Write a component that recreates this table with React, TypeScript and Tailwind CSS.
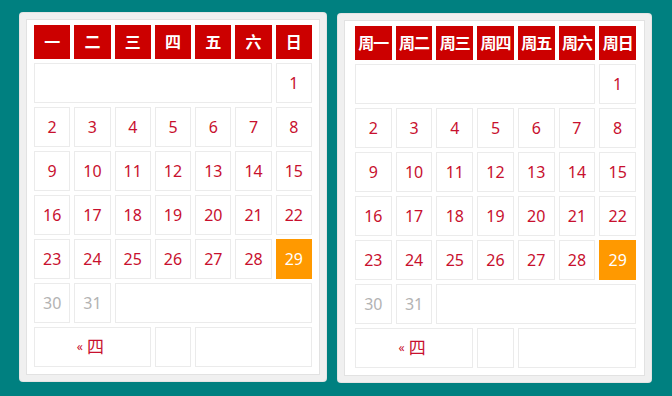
import React from 'react'

type Cell = { label?: string; span?: number; kind?: 'day' | 'today' | 'muted' | 'empty' | 'nav' }

const weeks: Cell[][] = [
  [{ span: 6, kind: 'empty' }, { label: '1' }],
  ['2', '3', '4', '5', '6', '7', '8'].map(label => ({ label })),
  ['9', '10', '11', '12', '13', '14', '15'].map(label => ({ label })),
  ['16', '17', '18', '19', '20', '21', '22'].map(label => ({ label })),
  [
    ...['23', '24', '25', '26', '27', '28'].map(label => ({ label })),
    { label: '29', kind: 'today' as const },
  ],
  [{ label: '30', kind: 'muted' }, { label: '31', kind: 'muted' }, { span: 5, kind: 'empty' }],
  [{ label: '« 四', span: 3, kind: 'nav' }, { kind: 'empty' }, { span: 3, kind: 'empty' }],
]

const spanClass: Record<number, string> = {
  1: 'col-span-1',
  3: 'col-span-3',
  5: 'col-span-5',
  6: 'col-span-6',
}

function DayCell({ cell }: { cell: Cell }) {
  const span = spanClass[cell.span ?? 1]
  if (cell.kind === 'today') {
    return (
      <div className={`${span} flex items-center justify-center bg-[#ff9900] text-[16px] text-white`}>
        {cell.label}
      </div>
    )
  }
  const color = cell.kind === 'muted' ? 'text-[#b3b3b3]' : 'text-[#c8102e]'
  return (
    <div className={`${span} flex items-center justify-center border border-[#ebebeb] bg-white text-[16px] ${color}`}>
      {cell.kind === 'nav' ? (
        <span className="flex items-center gap-[4px] pr-[4px]">
          <span className="text-[12px]">«</span>
          <span className="text-[17px]">四</span>
        </span>
      ) : (
        cell.label
      )}
    </div>
  )
}

function Calendar({ heads, wide }: { heads: string[]; wide?: boolean }) {
  return (
    <div className={`${wide ? 'w-[313px]' : 'w-[306px]'} rounded-[3px] bg-[#f0f0f0] p-[6px] shadow-[0_0_0_1px_#e4e4e4]`}>
      <div
        className={`border border-[#e2e2e2] bg-white pt-[5px] pb-[7px] ${wide ? 'pl-[10px] pr-[8px]' : 'px-[7px]'}`}
      >
        <div className="grid grid-cols-7 grid-rows-[34px_repeat(7,40px)] gap-x-[4px] gap-y-[4px]">
          {heads.map(h => (
            <div
              key={h}
              className={`flex items-center justify-center bg-[#cc0000] font-bold text-white ${
                wide ? 'text-[16px] tracking-[-1px]' : 'text-[16px]'
              }`}
            >
              {h}
            </div>
          ))}
          {weeks.flatMap((week, wi) => week.map((cell, ci) => <DayCell key={`${wi}-${ci}`} cell={cell} />))}
        </div>
      </div>
    </div>
  )
}

export default function App() {
  return (
    <div
      className="flex h-[396px] w-[672px] items-start gap-[12px] bg-[#008080] pl-[20px] pt-[13px]"
      style={{ fontFamily: '"Noto Sans", "Noto Sans CJK SC", sans-serif' }}
    >
      <Calendar heads={['一', '二', '三', '四', '五', '六', '日']} />
      <div className="pt-[1px]">
        <Calendar wide heads={['周一', '周二', '周三', '周四', '周五', '周六', '周日']} />
      </div>
    </div>
  )
}
